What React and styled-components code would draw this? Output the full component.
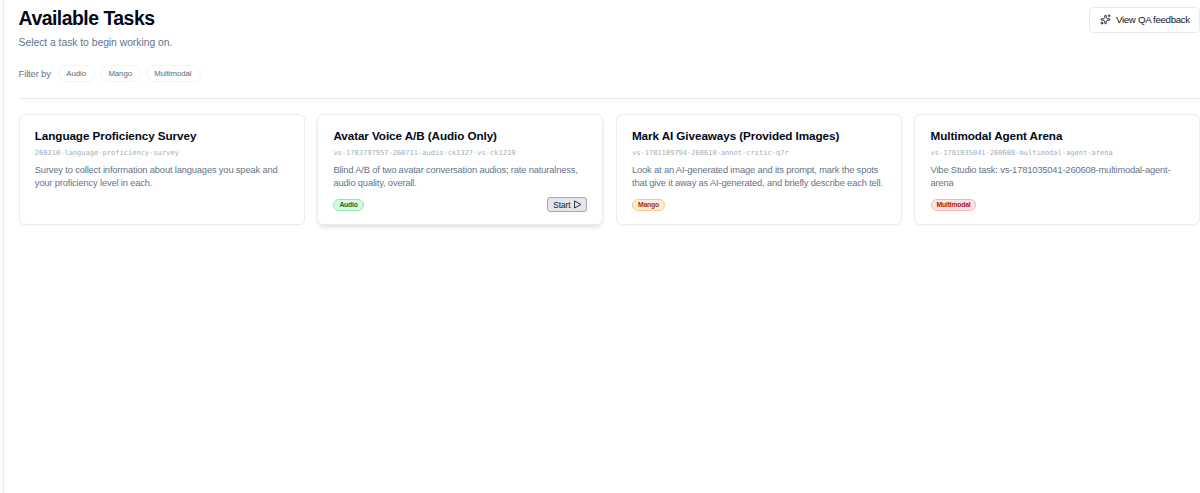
import React from 'react';
import styled, { createGlobalStyle } from 'styled-components';
import { Sparkles } from 'lucide-react';

const GlobalStyle = createGlobalStyle`
  *, *::before, *::after { box-sizing: border-box; }
  body {
    margin: 0;
    background: #fff;
    color: #020817;
    font-family: "Liberation Sans", Arial, sans-serif;
    overflow: hidden;
  }
  h1, h2, p { margin: 0; }
  button { font-family: inherit; margin: 0; }
`;

const Page = styled.main`
  margin-left: 3px;
  height: 493px;
  padding: 7px 0 0 14.6px;
  border-left: 1px solid #e6eaf0;
`;

const Header = styled.header`
  display: flex;
  justify-content: space-between;
  align-items: flex-start;
  height: 59px;
`;

const Title = styled.h1`
  font-size: 19.4px;
  line-height: 23px;
  letter-spacing: -0.5px;
  white-space: nowrap;
`;

const Subtitle = styled.p`
  margin-top: 5px;
  font-size: 10.4px;
  line-height: 15px;
  letter-spacing: -0.05px;
  color: #64748b;
`;

const FeedbackButton = styled.button`
  display: flex;
  align-items: center;
  gap: 5px;
  width: 111px;
  height: 26px;
  padding: 0 0 1px 10px;
  border: 1px solid #e5e9f0;
  border-radius: 4px;
  background: #fff;
  color: #0f172a;
  font-size: 9.7px;
  letter-spacing: -0.32px;
  white-space: nowrap;
`;

const Filters = styled.div`
  display: flex;
  align-items: center;
  height: 33px;
  padding-bottom: 17px;
  border-bottom: 1px solid #e5e8ed;
`;

const FilterLabel = styled.span`
  width: 39.6px;
  font-size: 9.5px;
  letter-spacing: -0.18px;
  color: #64748b;
  white-space: nowrap;
`;

const FilterChip = styled.button`
  width: ${({ $width }) => $width}px;
  height: 17px;
  margin-right: 5px;
  padding: 1px 1px 0 0;
  border: 1px solid #f1f3f6;
  border-radius: 9px;
  background: #fff;
  color: #64686f;
  font-size: 7.8px;
  letter-spacing: -0.05px;
  line-height: 14px;
`;

const Grid = styled.section`
  display: grid;
  grid-template-columns: repeat(4, 286px);
  gap: 12.6px;
  padding-top: 15px;
`;

const Card = styled.article`
  display: flex;
  flex-direction: column;
  height: 111px;
  padding: 14px 15px 12px 15.2px;
  border: 1px solid #e8ecf5;
  border-radius: 6px;
  background: #fff;
  box-shadow: ${({ $raised }) => ($raised ? '0 3px 4px -1px rgba(15,23,42,.14)' : '0 1px 1px rgba(15,23,42,.03)')};
`;

const CardTitle = styled.h2`
  font-size: 11.7px;
  line-height: 14px;
  letter-spacing: -0.08px;
  white-space: nowrap;
`;

const Slug = styled.p`
  margin-top: 5px;
  font-family: "DejaVu Sans Mono", monospace;
  font-size: 7px;
  line-height: 10px;
  letter-spacing: 0.02px;
  color: #a3adba;
  white-space: nowrap;
`;

const Description = styled.p`
  margin-top: 6px;
  font-size: 9.35px;
  line-height: 13px;
  letter-spacing: -0.165px;
  color: #64748b;
  white-space: pre;
`;

const CardFooter = styled.footer`
  display: flex;
  justify-content: space-between;
  align-items: center;
  height: 15px;
  margin-top: 7px;
`;

const tones = {
  green: ['#d5fbe2', '#8eeab0', '#166534'],
  orange: ['#ffedd5', '#fbc58c', '#9a3412'],
  red: ['#fee2e2', '#f9b4b4', '#991b1b'],
};

const Tag = styled.span`
  padding: 0 5px;
  height: 12px;
  border: 1px solid ${({ $tone }) => tones[$tone][1]};
  border-radius: 6px;
  background: ${({ $tone }) => tones[$tone][0]};
  color: ${({ $tone }) => tones[$tone][2]};
  font-size: 6.8px;
  font-weight: 700;
  letter-spacing: -0.2px;
  line-height: 9px;
`;

const StartButton = styled.button`
  display: flex;
  align-items: center;
  gap: 2px;
  width: 40px;
  height: 15px;
  padding: 0 0 0 5px;
  border: 1px solid #a5a8b1;
  border-radius: 3px;
  background: #e5e6eb;
  color: #0f172a;
  font-size: 8.4px;
  letter-spacing: -0.05px;
`;

const PlayIcon = () => (
  <svg width="9" height="9" viewBox="0 0 24 24" fill="none" stroke="currentColor" strokeWidth="2.3" strokeLinecap="round" strokeLinejoin="round">
    <polygon points="5 3 21 12 5 21" />
  </svg>
);

const filters = [['Audio', 37], ['Mango', 41], ['Multimodal', 54.5]];

const tasks = [
  { title: 'Language Proficiency Survey', slug: '260210-language-proficiency-survey', text: 'Survey to collect information about languages you speak and\nyour proficiency level in each.' },
  { title: 'Avatar Voice A/B (Audio Only)', slug: 'vs-1783797957-260711-audio-ck1327-vs-ck1219', text: 'Blind A/B of two avatar conversation audios; rate naturalness,\naudio quality, overall.', tag: 'Audio', tone: 'green', active: true },
  { title: 'Mark AI Giveaways (Provided Images)', slug: 'vs-1781109794-260610-annot-critic-q7r', text: 'Look at an AI-generated image and its prompt, mark the spots\nthat give it away as AI-generated, and briefly describe each tell.', tag: 'Mango', tone: 'orange' },
  { title: 'Multimodal Agent Arena', slug: 'vs-1781035041-260608-multimodal-agent-arena', text: 'Vibe Studio task: vs-1781035041-260608-multimodal-agent-\narena', tag: 'Multimodal', tone: 'red' },
];

export default function App() {
  return (
    <>
      <GlobalStyle />
      <Page>
        <Header>
          <div>
            <Title>Available Tasks</Title>
            <Subtitle>Select a task to begin working on.</Subtitle>
          </div>
          <FeedbackButton><Sparkles size={11} strokeWidth={2} />View QA feedback</FeedbackButton>
        </Header>
        <Filters>
          <FilterLabel>Filter by</FilterLabel>
          {filters.map(([name, width]) => <FilterChip key={name} $width={width}>{name}</FilterChip>)}
        </Filters>
        <Grid>
          {tasks.map((task) => (
            <Card key={task.slug} $raised={task.active}>
              <CardTitle>{task.title}</CardTitle>
              <Slug>{task.slug}</Slug>
              <Description>{task.text}</Description>
              {task.tag && (
                <CardFooter>
                  <Tag $tone={task.tone}>{task.tag}</Tag>
                  {task.active && <StartButton>Start<PlayIcon /></StartButton>}
                </CardFooter>
              )}
            </Card>
          ))}
        </Grid>
      </Page>
    </>
  );
}
